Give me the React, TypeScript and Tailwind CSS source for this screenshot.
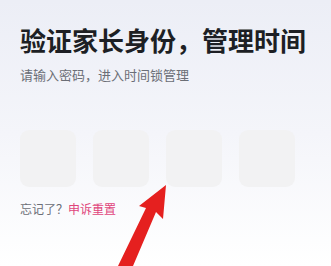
import React from 'react';

export default function App() {
  const font = { fontFamily: '"Noto Sans CJK SC", "Noto Sans", sans-serif' };
  return (
    <div
      className="relative w-[331px] h-[266px] overflow-hidden bg-gradient-to-b from-[#eceef6] via-[#f4f5fa] to-white"
      style={font}
    >
      <div className="px-5 pt-[22px]">
        <h1 className="whitespace-nowrap text-[26px] leading-[36px] font-bold text-[#1d1f24]">
          验证家长身份，管理时间
        </h1>
        <p className="mt-[8px] text-[13px] leading-[18px] text-[#6b6e76]">
          请输入密码，进入时间锁管理
        </p>

        {/* PIN boxes */}
        <div className="mt-[46px] flex gap-[17px]">
          {[0, 1, 2, 3].map((i) => (
            <div key={i} className="w-[56px] h-[57px] rounded-[9px] bg-[#f2f2f3]" />
          ))}
        </div>

        <div className="mt-[13px] text-[12px] leading-[18px]">
          <span className="text-[#6b6e76]">忘记了？</span>
          <span className="text-[#e0457b]">申诉重置</span>
        </div>
      </div>

      {/* annotation arrow */}
      <svg className="absolute inset-0" width="331" height="266" viewBox="0 0 331 266">
        <polygon
          points="166,185 163,219 156,212 133,266 118,266 146,208 139,206"
          fill="#e5201f"
        />
      </svg>
    </div>
  );
}
